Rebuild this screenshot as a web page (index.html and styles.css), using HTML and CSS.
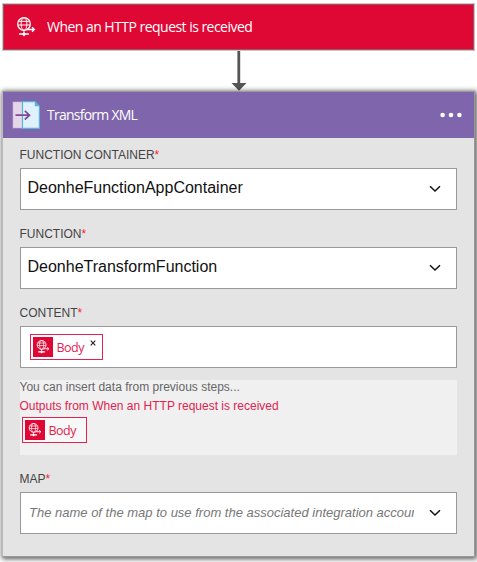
FILE: index.html
```html
<!DOCTYPE html>
<html lang="en">
<head>
<meta charset="utf-8">
<title>Transform XML</title>
<link rel="stylesheet" href="styles.css">
</head>
<body>
<svg class="defs" aria-hidden="true">
  <symbol id="globe" viewBox="0 0 20 20">
    <g fill="none" stroke="#fff" stroke-width="1">
      <circle cx="8" cy="7" r="6.3" stroke-width="1.3"/>
      <ellipse cx="8" cy="7" rx="2.9" ry="6.2"/>
      <path d="M2.6 4.3h10.8M1.8 8h12.4M8 13v3"/>
      <path d="M11 12.5h7M16 10.3l2.4 2.2-2.4 2.2" stroke-width="1.3"/>
    </g>
    <path d="M3 16.2h3.4L8 15.2l1.6 1H13v1.6H9.6L8 19.4l-1.6-1.6H3z" fill="#fff"/>
  </symbol>
  <symbol id="chevron" viewBox="0 0 12 8"><path d="M1 1.2l5 4.8 5-4.8" fill="none" stroke="#111" stroke-width="1.5"/></symbol>
</svg>
<main class="flow">
  <header class="trigger">
    <svg class="trigger-icon"><use href="#globe"/></svg>
    <span class="trigger-title">When an HTTP request is received</span>
  </header>
  <svg class="arrow" viewBox="0 0 16 40"><path d="M6.4 0h2.8v32h6.3L8 39.8.5 32h5.9z" fill="#555"/></svg>
  <section class="card">
    <header class="card-head">
      <svg class="xml-icon" viewBox="0 0 28 28">
        <path d="M.6.6h10v26.8H.6z" fill="#e4d7e9" stroke="#a277b5"/>
        <path d="M10.5.6h12.3l4.6 4.6v22.2H10.5z" fill="#dff1fa" stroke="#58b4d9" stroke-width="1.2"/>
        <path d="M22.8.3v4.9h4.9z" fill="#58b4d9"/>
        <path d="M3.5 14.2h14M12.8 9.9l4.7 4.3-4.7 4.3" fill="none" stroke="#804998" stroke-width="1.7"/>
      </svg>
      <span class="card-title">Transform XML</span>
      <svg class="dots" viewBox="0 0 22 6"><g fill="#fff"><circle cx="2.6" cy="3" r="2.3"/><circle cx="11" cy="3" r="2.3"/><circle cx="19.4" cy="3" r="2.3"/></g></svg>
    </header>
    <div class="form">
      <label class="label">FUNCTION CONTAINER<b>*</b></label>
      <div class="box"><span class="value">DeonheFunctionAppContainer</span><svg class="chevron"><use href="#chevron"/></svg></div>
      <label class="label">FUNCTION<b>*</b></label>
      <div class="box"><span class="value">DeonheTransformFunction</span><svg class="chevron"><use href="#chevron"/></svg></div>
      <label class="label">CONTENT<b>*</b></label>
      <div class="box">
        <span class="token token-input"><span class="token-icon"><svg><use href="#globe"/></svg></span><span class="token-text">Body</span><svg class="close" viewBox="0 0 6 6"><path d="M.7.7l4.6 4.6M5.3.7L.7 5.3" stroke="#222" stroke-width="1.1"/></svg></span>
      </div>
      <div class="insert">
        <p class="hint">You can insert data from previous steps...</p>
        <p class="source">Outputs from When an HTTP request is received</p>
        <span class="token"><span class="token-icon"><svg><use href="#globe"/></svg></span><span class="token-text">Body</span></span>
      </div>
      <label class="label">MAP<b>*</b></label>
      <div class="box"><span class="placeholder">The name of the map to use from the associated integration account</span><svg class="chevron"><use href="#chevron"/></svg></div>
    </div>
  </section>
</main>
</body>
</html>
```
FILE: styles.css
```css
* { box-sizing: border-box; }
body {
  margin: 0;
  height: 562px;
  overflow: hidden;
  background: #fff;
  font-family: "Liberation Sans", Arial, sans-serif;
}
.defs { display: block; width: 0; height: 0; }
.flow { display: flex; flex-direction: column; width: 473px; margin-left: 2px; padding-top: 3px; }
.trigger {
  display: flex;
  align-items: center;
  height: 48px;
  padding-left: 13px;
  background: #df0734;
  border: 1px solid #c8c8c8;
  box-shadow: inset 0 0 0 1px #a0505f;
}
.trigger-icon { width: 20px; height: 20px; }
.trigger-title, .card-title {
  color: #fff;
  font-family: "Open Sans", "Noto Sans", sans-serif;
  font-size: 14px;
  line-height: 20px;
  white-space: nowrap;
}
.trigger-title { margin-left: 11px; letter-spacing: -0.53px; }
.arrow { width: 16px; height: 40px; margin-left: 229px; }
.card {
  height: 466px;
  border: 1px solid #999;
  border-left: 1px solid #bbb;
  background: #e4e4e4;
  box-shadow: 1px 1px 5px 1px rgba(0, 0, 0, .65);
}
.card-head {
  display: flex;
  align-items: center;
  height: 46px;
  padding: 0 12px 0 9px;
  background: #7e65ac;
}
.xml-icon { width: 28px; height: 28px; }
.card-title { margin-left: 7px; letter-spacing: -0.75px; }
.dots { width: 22px; height: 6px; margin-left: auto; }
.form { display: flex; flex-direction: column; padding: 0 17px 0 16.5px; }
.label { height: 30px; padding-top: 10px; font-size: 12px; line-height: 15px; color: #444; }
.label b { color: #f22; font-weight: normal; }
.box {
  display: flex;
  align-items: center;
  height: 42px;
  margin-bottom: 7px;
  padding: 0 15px 0 7px;
  border: 1px solid #999;
  background: #fff;
}
.value { padding-bottom: 2px; font-size: 16px; line-height: 20px; color: #111; }
.chevron { flex: none; width: 12px; height: 8px; margin-top: -1px; margin-left: auto; }
.placeholder {
  width: 384.5px;
  margin-left: 1.5px;
  overflow: hidden;
  white-space: nowrap;
  font-size: 13px;
  font-style: italic;
  line-height: 18px;
  color: #777;
}
.token {
  display: flex;
  align-items: center;
  width: 65px;
  height: 26px;
  margin-left: 2px;
  padding-left: 2px;
  border: 1px solid #df2450;
  background: #f8f8f8;
}
.token-icon {
  display: flex;
  align-items: center;
  justify-content: center;
  width: 20px;
  height: 20px;
  background: #df0734;
}
.token-icon svg { width: 14px; height: 14px; }
.token-text { width: 27px; margin-left: 4px; padding-top: 1px; font-family: "Open Sans", "Noto Sans", sans-serif; font-size: 12.5px; line-height: 18px; letter-spacing: -0.5px; color: #df2450; }
.token-input { width: 73px; background: #fff; }
.close { width: 6px; height: 6px; margin: -9px 0 0 6px; }
.insert { height: 75px; margin: 5px 0 7px; background: #f0f0f0; }
.hint, .source { margin: 0; font-size: 12px; white-space: nowrap; }
.hint { height: 17px; line-height: 15px; color: #666; }
.source { height: 20px; line-height: 18px; color: #df2450; }
```
